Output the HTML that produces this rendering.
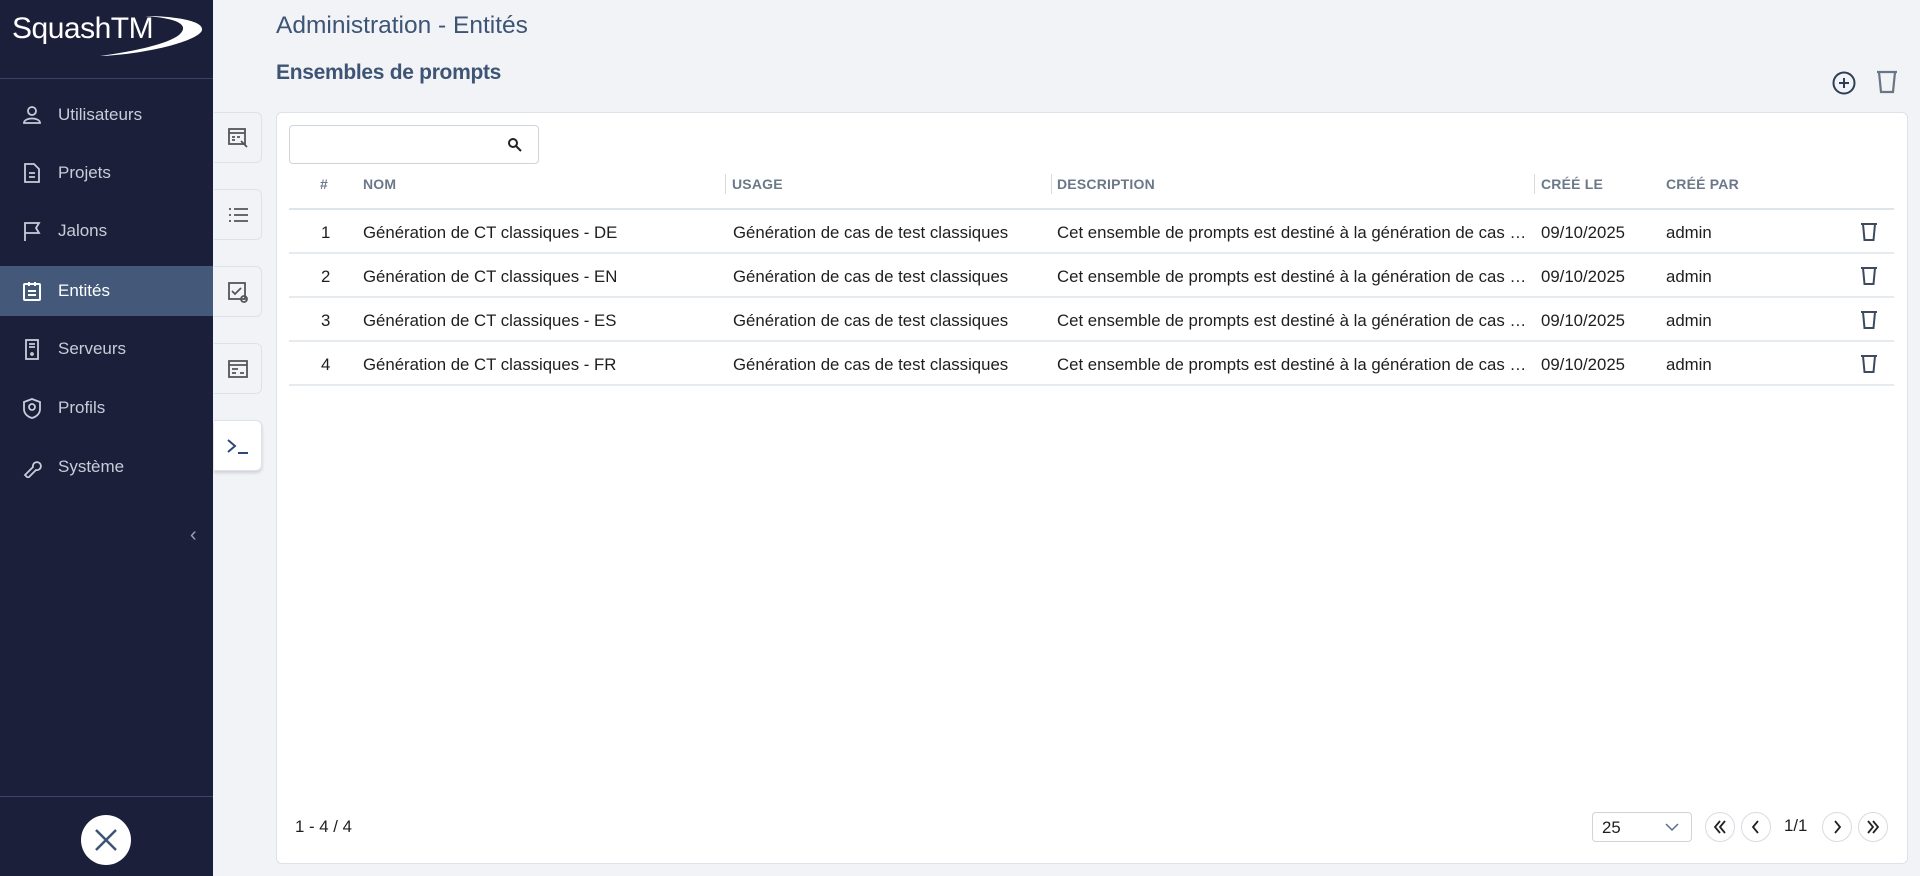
<!DOCTYPE html>
<html><head><meta charset="utf-8">
<style>
*{box-sizing:border-box;margin:0;padding:0}
body{width:1920px;height:876px;background:#f1f3f7;font-family:"Liberation Sans",sans-serif;position:relative;overflow:hidden;color:#1e1e1e}
.abs{position:absolute}
#side{left:0;top:0;width:213px;height:876px;background:#1b1f3a}
.mi{position:absolute;left:0;width:213px;height:50px;display:flex;align-items:center;color:#c9ccd8;font-size:17px}
.mi svg{position:absolute;left:22px}
.mi span{position:absolute;left:58px}
.mi.act{background:#44597a;color:#fff}
.tab{position:absolute;left:214px;width:48px;height:51px;background:#f1f3f7;border:1px solid #dde2ea;border-left:none;border-radius:0 6px 6px 0;display:flex;align-items:center;justify-content:center}
.tab.act{background:#fff;box-shadow:0 2px 3px rgba(0,0,0,.15)}
#panel{left:276px;top:112px;width:1632px;height:752px;background:#fff;border:1px solid #dde3ea;border-radius:6px}
.hd{position:absolute;top:176px;font-size:14px;font-weight:bold;color:#6b7888;letter-spacing:.2px}
.sep{position:absolute;top:174px;width:1px;height:20px;background:#d5d9e0}
.row{position:absolute;left:289px;width:1605px;height:44px;border-bottom:2px solid #e6ebf0;font-size:16.8px}
.row div{position:absolute;top:13px;white-space:nowrap}
.pb{position:absolute;top:812px;width:30px;height:30px;border:1px solid #d8dbe0;border-radius:50%;display:flex;align-items:center;justify-content:center}
</style></head><body>
<div id="side" class="abs">
  <div class="abs" style="left:12px;top:12px;color:#fff;font-size:30px;letter-spacing:-.5px">SquashTM</div>
  <svg class="abs" style="left:90px;top:12px" width="115" height="46"><path d="M10 44 C60 42 110 28 112 18 C114 8 80 4 55 4 C85 6 100 12 90 22 C80 32 40 40 10 44Z" fill="#fff"/></svg>
  <div class="abs" style="left:0;top:78px;width:213px;height:1px;background:#3a3f66"></div>
  <div class="mi" style="top:90px"><svg width="20" height="20" fill="none" stroke="#c9ccd8" stroke-width="1.8"><circle cx="10" cy="6" r="4"/><path d="M2 18 C2 12 18 12 18 18Z"/></svg><span>Utilisateurs</span></div>
  <div class="mi" style="top:148px"><svg width="20" height="22" fill="none" stroke="#c9ccd8" stroke-width="1.8"><path d="M3 2h9l5 5v13H3z"/><path d="M7 11h6M7 15h6"/></svg><span>Projets</span></div>
  <div class="mi" style="top:206px"><svg width="20" height="22" fill="none" stroke="#c9ccd8" stroke-width="1.8"><path d="M3 21V3h14l-3 5 3 5H3"/></svg><span>Jalons</span></div>
  <div class="mi act" style="top:266px"><svg width="20" height="22" fill="none" stroke="#fff" stroke-width="2"><rect x="2" y="4" width="16" height="16" rx="1"/><path d="M7 2v4M13 2v4M6 11h8M6 15h8"/></svg><span>Entités</span></div>
  <div class="mi" style="top:324px"><svg width="20" height="22" fill="none" stroke="#c9ccd8" stroke-width="1.8"><rect x="4" y="2" width="12" height="19"/><path d="M7 6h6M7 9h6"/><circle cx="10" cy="16" r="1"/></svg><span>Serveurs</span></div>
  <div class="mi" style="top:383px"><svg width="20" height="22" fill="none" stroke="#c9ccd8" stroke-width="1.8"><path d="M10 2l8 3v7c0 5-4 8-8 9-4-1-8-4-8-9V5z"/><circle cx="10" cy="10" r="3"/></svg><span>Profils</span></div>
  <div class="mi" style="top:442px"><svg width="20" height="22" fill="none" stroke="#c9ccd8" stroke-width="1.8"><path d="M3 19l8-8a4 4 0 1 1 3 3l-8 8z" /></svg><span>Système</span></div>
  <div class="abs" style="left:190px;top:524px;color:#9aa0b8;font-size:20px">&lsaquo;</div>
  <div class="abs" style="left:0;top:796px;width:213px;height:1px;background:#3e4372"></div>
  <div class="abs" style="left:81px;top:815px;width:50px;height:50px;border-radius:50%;background:#fff"><svg width="50" height="50"><path d="M15 15L35 35M35 15L15 35" stroke="#3d5475" stroke-width="2.5"/></svg></div>
</div>
<div class="abs" style="left:276px;top:12px;font-size:24.5px;color:#3d5475">Administration - Entités</div>
<div class="abs" style="left:276px;top:61px;font-size:21px;color:#3d5475;font-weight:bold;letter-spacing:-.3px">Ensembles de prompts</div>
<svg class="abs" style="left:1831px;top:70px" width="26" height="26" fill="none" stroke="#2e3e55" stroke-width="2"><circle cx="13" cy="13" r="10.5"/><path d="M13 8v10M8 13h10"/></svg>
<svg class="abs" style="left:1875px;top:69px" width="24" height="26" fill="none" stroke="#6a7585" stroke-width="2.2"><path d="M2 3h20M4 3l2 20h12l2-20"/></svg>
<div class="tab" style="top:112px"><svg width="22" height="22" fill="none" stroke="#555" stroke-width="1.8"><rect x="2" y="2" width="16" height="15"/><path d="M2 6h16M5 10h3M10 10h3M5 13h3"/><path d="M14 14l6 6"/></svg></div>
<div class="tab" style="top:189px"><svg width="22" height="22" fill="none" stroke="#555" stroke-width="1.8"><path d="M7 5h14M7 11h14M7 17h14M2 5h2M2 11h2M2 17h2"/></svg></div>
<div class="tab" style="top:266px"><svg width="22" height="22" fill="none" stroke="#555" stroke-width="1.8"><rect x="2" y="2" width="16" height="16"/><path d="M5 10l3 3 6-6"/><circle cx="17" cy="18" r="3"/></svg></div>
<div class="tab" style="top:343px"><svg width="22" height="22" fill="none" stroke="#555" stroke-width="1.8"><rect x="2" y="3" width="18" height="16"/><path d="M2 7h18M5 11h6M5 15h4M13 15h4"/></svg></div>
<div class="tab act" style="top:420px"><svg width="26" height="22" fill="none" stroke="#2e4a7a" stroke-width="2"><path d="M3 5l7 6-7 6M13 18h10"/></svg></div>
<div id="panel" class="abs"></div>
<div class="abs" style="left:289px;top:125px;width:250px;height:39px;border:1px solid #d0d4da;border-radius:4px"><svg class="abs" style="left:217px;top:11px" width="16" height="16" fill="none" stroke="#222" stroke-width="2"><circle cx="6" cy="6" r="4"/><path d="M9 9l5 5"/></svg></div>
<div class="hd" style="left:320px">#</div>
<div class="hd" style="left:363px">NOM</div>
<div class="sep" style="left:725px"></div><div class="hd" style="left:732px">USAGE</div>
<div class="sep" style="left:1051px"></div><div class="hd" style="left:1057px">DESCRIPTION</div>
<div class="sep" style="left:1534px"></div><div class="hd" style="left:1541px">CRÉÉ LE</div>
<div class="hd" style="left:1666px">CRÉÉ PAR</div>
<div class="abs" style="left:289px;top:208px;width:1605px;height:2px;background:#dde4ea"></div>
<div class="row" style="top:210px"><div style="left:32px">1</div><div style="left:74px">Génération de CT classiques - DE</div><div style="left:444px">Génération de cas de test classiques</div><div style="left:768px;width:477px;overflow:hidden;text-overflow:ellipsis">Cet ensemble de prompts est destiné à la génération de cas de test</div><div style="left:1252px">09/10/2025</div><div style="left:1377px">admin</div><svg style="position:absolute;left:1571px;top:12px" width="18" height="20" fill="none" stroke="#3d4a5f" stroke-width="2"><path d="M1 2h16M3 2l1.5 16h9L15 2"/></svg></div>
<div class="row" style="top:254px"><div style="left:32px">2</div><div style="left:74px">Génération de CT classiques - EN</div><div style="left:444px">Génération de cas de test classiques</div><div style="left:768px;width:477px;overflow:hidden;text-overflow:ellipsis">Cet ensemble de prompts est destiné à la génération de cas de test</div><div style="left:1252px">09/10/2025</div><div style="left:1377px">admin</div><svg style="position:absolute;left:1571px;top:12px" width="18" height="20" fill="none" stroke="#3d4a5f" stroke-width="2"><path d="M1 2h16M3 2l1.5 16h9L15 2"/></svg></div>
<div class="row" style="top:298px"><div style="left:32px">3</div><div style="left:74px">Génération de CT classiques - ES</div><div style="left:444px">Génération de cas de test classiques</div><div style="left:768px;width:477px;overflow:hidden;text-overflow:ellipsis">Cet ensemble de prompts est destiné à la génération de cas de test</div><div style="left:1252px">09/10/2025</div><div style="left:1377px">admin</div><svg style="position:absolute;left:1571px;top:12px" width="18" height="20" fill="none" stroke="#3d4a5f" stroke-width="2"><path d="M1 2h16M3 2l1.5 16h9L15 2"/></svg></div>
<div class="row" style="top:342px"><div style="left:32px">4</div><div style="left:74px">Génération de CT classiques - FR</div><div style="left:444px">Génération de cas de test classiques</div><div style="left:768px;width:477px;overflow:hidden;text-overflow:ellipsis">Cet ensemble de prompts est destiné à la génération de cas de test</div><div style="left:1252px">09/10/2025</div><div style="left:1377px">admin</div><svg style="position:absolute;left:1571px;top:12px" width="18" height="20" fill="none" stroke="#3d4a5f" stroke-width="2"><path d="M1 2h16M3 2l1.5 16h9L15 2"/></svg></div>
<div class="abs" style="left:295px;top:817px;font-size:16.8px">1 - 4 / 4</div>
<div class="abs" style="left:1592px;top:812px;width:100px;height:30px;border:1px solid #d0d4da;border-radius:4px;font-size:16.8px;padding:5px 9px">25<svg class="abs" style="left:72px;top:9px" width="14" height="10" fill="none" stroke="#5a6d88" stroke-width="1.5"><path d="M1 2l6 6 6-6"/></svg></div>
<div class="pb" style="left:1705px"><svg width="16" height="14" fill="none" stroke="#222" stroke-width="1.8"><path d="M8 1L3 7l5 6M13 1L8 7l5 6"/></svg></div>
<div class="pb" style="left:1741px"><svg width="16" height="14" fill="none" stroke="#222" stroke-width="1.8"><path d="M10 1L5 7l5 6"/></svg></div>
<div class="abs" style="left:1784px;top:816px;font-size:16.8px">1/1</div>
<div class="pb" style="left:1822px"><svg width="16" height="14" fill="none" stroke="#222" stroke-width="1.8"><path d="M6 1l5 6-5 6"/></svg></div>
<div class="pb" style="left:1858px"><svg width="16" height="14" fill="none" stroke="#222" stroke-width="1.8"><path d="M3 1l5 6-5 6M8 1l5 6-5 6"/></svg></div>
</body></html>
